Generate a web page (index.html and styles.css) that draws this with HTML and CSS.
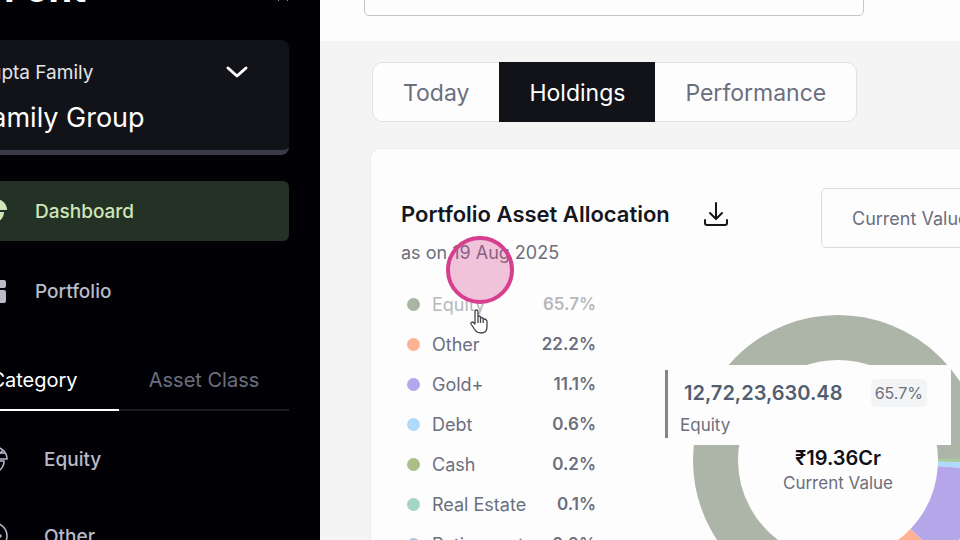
FILE: index.html
```
<!DOCTYPE html>
<html lang="en">
<head>
    <meta charset="UTF-8">
    <meta name="viewport" content="width=device-width, initial-scale=1.0">
    <title>Portfolio Dashboard</title>
    <link rel="stylesheet" href="styles.css">
</head>
<body>
    <aside class="sidebar">
        <div class="sidebar-inner">
            <div class="brand">
                <span class="brand-name">Font</span>
                <button class="collapse-btn" type="button" aria-label="Collapse menu">
                    <svg width="12" height="12" viewBox="0 0 12 12"><path d="M1 11L6 6l5 5" fill="none" stroke="#8b8d98" stroke-width="1"/></svg>
                </button>
            </div>

            <button class="family-card" type="button">
                <span class="family-top">
                    <span class="family-name">Gupta Family</span>
                    <svg width="24" height="16" viewBox="0 0 24 16"><path d="M3 4l9 8 9-8" fill="none" stroke="#fff" stroke-width="3" stroke-linecap="round" stroke-linejoin="round"/></svg>
                </span>
                <span class="family-group">Family Group</span>
            </button>

            <nav class="menu">
                <a class="menu-item active" href="#">
                    <svg class="icon" viewBox="0 0 28 28" fill="currentColor"><path d="M16 2a11 11 0 0 1 11 11H16z"/><path d="M13 4v11h11a11 11 0 1 1-11-11z"/></svg>
                    Dashboard
                </a>
                <a class="menu-item" href="#">
                    <svg class="icon" viewBox="0 0 28 28" fill="currentColor"><rect x="3" y="3" width="10" height="13" rx="2"/><rect x="3" y="18" width="10" height="8" rx="2"/><rect x="15" y="3" width="11" height="8" rx="2"/><rect x="15" y="13" width="11" height="13" rx="2"/></svg>
                    Portfolio
                </a>
            </nav>

            <div class="side-tabs">
                <button class="side-tab active" type="button">Category</button>
                <button class="side-tab" type="button">Asset Class</button>
            </div>

            <nav class="categories">
                <a class="menu-item" href="#">
                    <svg class="icon" viewBox="0 0 28 28" fill="none" stroke="currentColor" stroke-width="1.5"><path d="M15 2a12 12 0 0 1 12 12H15zM15 14l8-9M19 3v5h6"/><path d="M12 4v12h12a12 12 0 1 1-12-12z"/></svg>
                    Equity
                </a>
                <a class="menu-item" href="#">
                    <svg class="icon" viewBox="0 0 28 28" fill="none" stroke="currentColor" stroke-width="1.5"><circle cx="14" cy="14" r="13"/><circle cx="8" cy="14" r="1"/><circle cx="14" cy="14" r="1"/><circle cx="20" cy="14" r="1"/></svg>
                    Other
                </a>
            </nav>
        </div>
    </aside>

    <main class="main">
        <header class="topbar">
            <input class="search" type="text" aria-label="Search">
        </header>

        <div class="view-tabs">
            <button class="view-tab" type="button">Today</button>
            <button class="view-tab active" type="button">Holdings</button>
            <button class="view-tab" type="button">Performance</button>
        </div>

        <section class="card">
            <div class="card-header">
                <div>
                    <div class="card-title">
                        <h2>Portfolio Asset Allocation</h2>
                        <button class="download-btn" type="button" aria-label="Download">
                            <svg width="24" height="26" viewBox="0 0 24 26" fill="none" stroke="#16171c" stroke-width="2" stroke-linecap="round" stroke-linejoin="round"><path d="M12 2v15M6 12l6 6 6-6M1 19v3q0 2 2 2h18q2 0 2-2v-3"/></svg>
                        </button>
                    </div>
                    <p class="as-on">as on 19 Aug 2025</p>
                </div>
                <select class="metric" aria-label="Metric">
                    <option>Current Value</option>
                </select>
            </div>

            <div class="card-body">
                <ul class="legend">
                    <li class="faded"><span class="dot equity"></span>Equity<b>65.7%</b></li>
                    <li><span class="dot other"></span>Other<b>22.2%</b></li>
                    <li><span class="dot gold"></span>Gold+<b>11.1%</b></li>
                    <li><span class="dot debt"></span>Debt<b>0.6%</b></li>
                    <li><span class="dot cash"></span>Cash<b>0.2%</b></li>
                    <li><span class="dot estate"></span>Real Estate<b>0.1%</b></li>
                    <li><span class="dot retirement"></span>Retirement<b>0.0%</b></li>
                </ul>

                <div class="chart">
                    <!-- each slice is a dash on a circle whose circumference counts as 100 -->
                    <svg class="donut" viewBox="0 0 290 290" fill="none" stroke-width="45">
                        <circle cx="145" cy="145" r="122.5" pathLength="100" stroke="#adb5a8" stroke-dasharray="65.8 34.2" stroke-dashoffset="65.8"/>
                        <circle cx="145" cy="145" r="122.5" pathLength="100" stroke="#aac9a0" stroke-dasharray="0.5 99.5" stroke-dashoffset="0.2"/>
                        <circle cx="145" cy="145" r="122.5" pathLength="100" stroke="#aedafd" stroke-dasharray="0.7 99.3" stroke-dashoffset="-0.3"/>
                        <circle cx="145" cy="145" r="122.5" pathLength="100" stroke="#b5a6ea" stroke-dasharray="11.1 88.9" stroke-dashoffset="-1"/>
                        <circle cx="145" cy="145" r="122.5" pathLength="100" stroke="#fdb393" stroke-dasharray="22.2 77.8" stroke-dashoffset="-12.1"/>
                    </svg>
                    <div class="total">
                        <strong>₹19.36Cr</strong>
                        <span>Current Value</span>
                    </div>
                    <div class="tooltip">
                        <div class="tooltip-body">
                            <div class="tooltip-row">
                                <strong>12,72,23,630.48</strong>
                                <span class="percent">65.7%</span>
                            </div>
                            <span class="tooltip-label">Equity</span>
                        </div>
                    </div>
                </div>
            </div>
        </section>
    </main>

    <div class="click-marker"></div>
    <svg class="pointer" width="18" height="25" viewBox="0 0 18 25"><path d="M5 14V3q0-2 1.500-2T8 3v7V8q0-1 1.200-1t1.300 1.200V10q0-1.500 1.300-1.500T13.200 10v1.500q0-1.500 1.400-1.500T17 12v6q0 6-6 6-4 0-6-3l-4-6q-.5-1.500 1-2 1.500 0 3 2zM8 10v4M10.500 10v4M13.200 11v3" fill="#fff" stroke="#44464e" stroke-width="1.300" stroke-linejoin="round"/></svg>
</body>
</html>
```

FILE: styles.css
```
* {
    box-sizing: border-box;
}
body {
    margin: 0;
    height: 100vh;
    overflow: hidden;
    display: flex;
    background: #f4f4f4;
    color: #6b6f7e;
    font-family: Inter, 'Liberation Sans', sans-serif;
    font-size: 18px;
}
button, select, input {
    font-family: inherit;
}
button {
    border: none;
    padding: 0;
    background: none;
    cursor: pointer;
}

/* Sidebar */
.sidebar {
    flex: 0 0 320px;
    overflow: hidden;
    background: #020206;
}
.sidebar-inner {
    width: 340px;
    margin-left: -51px;
}
.brand {
    height: 40px;
    display: flex;
    justify-content: space-between;
    align-items: flex-start;
    padding-left: 55px;
}
.brand-name {
    margin-top: -32px;
    color: #fff;
    font-size: 38px;
    line-height: 40px;
    font-weight: 700;
}
.collapse-btn {
    margin-top: -10px;
    line-height: 0;
}
.family-card {
    display: block;
    width: 100%;
    height: 115px;
    padding: 18px 40px 14px 27px;
    background: #121318;
    border-bottom: 5px solid #3a3b48;
    border-radius: 8px;
    color: #fff;
    text-align: left;
}
.family-top {
    display: flex;
    justify-content: space-between;
    align-items: center;
    height: 28px;
}
.family-name {
    color: #e4e5ea;
    font-size: 19px;
}
.family-group {
    display: block;
    margin-top: 14px;
    font-size: 27px;
    line-height: 36px;
}
.menu {
    display: grid;
    gap: 20px;
    margin-top: 26px;
}
.menu-item {
    display: flex;
    align-items: center;
    gap: 27px;
    height: 60px;
    padding-left: 31px;
    border-radius: 6px;
    color: #b9bbca;
    font-size: 19px;
    font-weight: 500;
    text-decoration: none;
}
.menu-item.active {
    background: #243226;
    color: #d0e6b8;
}
.icon {
    width: 28px;
    height: 28px;
}
.side-tabs {
    display: flex;
    margin-top: 30px;
}
.side-tab {
    flex: 1;
    height: 60px;
    border-bottom: 2px solid #1b1b20;
    color: #6b6f7e;
    font-size: 20px;
}
.side-tab.active {
    border-color: #fff;
    color: #fff;
}
.categories {
    display: grid;
    gap: 17px;
    margin-top: 18px;
}
.categories .menu-item {
    gap: 36px;
}

/* Main column */
.main {
    flex: 1;
    min-width: 0;
    overflow: hidden;
}
.topbar {
    display: flex;
    align-items: flex-start;
    height: 41px;
    padding-left: 44px;
    background: #fdfdfd;
}
.search {
    width: 500px;
    height: 60px;
    margin-top: -44px;
    border: 1px solid #c6c6c9;
    border-radius: 5px;
    background: #fdfdfd;
}
.view-tabs {
    display: flex;
    width: max-content;
    margin: 21px 0 26px 52px;
    border: 1px solid #e2e2e4;
    border-radius: 10px;
    background: #fdfdfd;
}
.view-tab {
    height: 58px;
    padding: 1px 30px 0;
    color: #6b6f7e;
    font-size: 23px;
}
.view-tab.active {
    margin: -1px 0;
    height: 60px;
    background: #121318;
    color: #fff;
}
.card {
    width: calc(100% + 31px);
    margin-left: 50px;
    padding: 39px 30px;
    border: 1px solid #ededee;
    border-radius: 10px;
    background: #fdfdfd;
}
.card-header {
    display: flex;
    justify-content: space-between;
}
.card-title {
    display: flex;
    align-items: center;
    gap: 34px;
    height: 51px;
}
.card-title h2 {
    margin: 0;
    color: #16171c;
    font-size: 22px;
    font-weight: 600;
}
.download-btn {
    line-height: 0;
}
.as-on {
    margin: 0;
    line-height: 28px;
}
.metric {
    appearance: none;
    width: 189px;
    height: 60px;
    padding: 0 30px;
    border: 1px solid #dcdce0;
    border-radius: 5px;
    background: #fdfdfd;
    color: #6b6f7e;
    font-size: 18px;
}
.card-body {
    display: flex;
    gap: 97px;
    margin-top: 17px;
}
.legend {
    flex: 0 0 195px;
    margin: 0;
    padding: 0 0 0 6px;
    list-style: none;
}
.legend li {
    display: flex;
    align-items: center;
    height: 40px;
}
.legend b {
    margin-left: auto;
    font-size: 17px;
    font-weight: 600;
}
.legend .faded {
    color: #b7b8bc;
}
.dot {
    width: 13px;
    height: 13px;
    margin-right: 12px;
    border-radius: 50%;
}
.equity { background: #a9b5a3; }
.other { background: #fdb393; }
.gold { background: #b5a6ea; }
.debt { background: #aedafd; }
.cash { background: #a9bf86; }
.estate { background: #a2d5c8; }
.retirement { background: #a9c9de; }

.chart {
    position: relative;
    width: 290px;
    height: 290px;
    margin-top: 31px;
}
.donut {
    display: block;
    width: 100%;
}
.total {
    position: absolute;
    top: 131px;
    left: 0;
    right: 0;
    display: grid;
    justify-items: center;
    font-size: 17px;
    line-height: 25px;
}
.total strong {
    color: #101116;
    font-size: 20px;
    font-weight: 600;
}
.tooltip {
    position: absolute;
    top: 50px;
    left: -34px;
    width: 292px;
    padding: 5px 6px 7px;
    background: #fdfdfd;
}
.tooltip-body {
    height: 68px;
    padding: 8px 18px 0 12px;
    border-left: 3px solid #85868a;
}
.tooltip-row {
    display: flex;
    justify-content: space-between;
    align-items: center;
    height: 30px;
    padding-left: 4px;
}
.tooltip-row strong {
    color: #505e70;
    font-size: 20px;
    font-weight: 600;
}
.percent {
    padding: 0 4px;
    border-radius: 5px;
    background: #f3f4f5;
    font-size: 16px;
    line-height: 28px;
}
.tooltip-label {
    font-size: 17px;
    line-height: 34px;
}

/* Click highlight and cursor float over the page */
.click-marker {
    position: absolute;
    top: 236px;
    left: 446px;
    width: 68px;
    height: 68px;
    border: 4px solid #d63f8d;
    border-radius: 50%;
    background: rgba(214, 63, 141, 0.3);
}
.pointer {
    position: absolute;
    top: 309px;
    left: 470px;
}
```
